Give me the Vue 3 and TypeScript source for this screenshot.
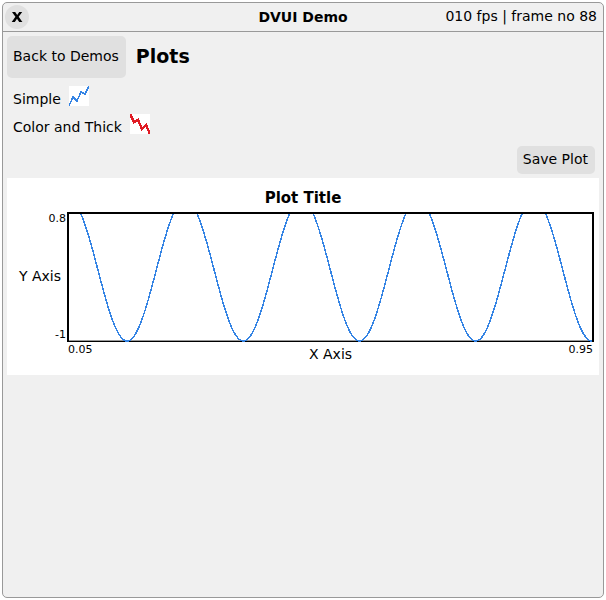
<script setup lang="ts">
interface Range {
  min: number
  max: number
}

const xRange: Range = { min: 0.05, max: 0.95 }
const yRange: Range = { min: -1, max: 0.8 }
const plotWidth = 525
const plotHeight = 128
const frequency = 5
const samples = 1000

function wave(x: number): number {
  return Math.sin(2 * Math.PI * frequency * x)
}

function buildPoints(): string {
  const points: string[] = []
  for (let i = 0; i <= samples; i++) {
    const x = xRange.min + ((xRange.max - xRange.min) * i) / samples
    const px = ((x - xRange.min) / (xRange.max - xRange.min)) * plotWidth
    const py = ((yRange.max - wave(x)) / (yRange.max - yRange.min)) * plotHeight
    points.push(`${px.toFixed(2)},${py.toFixed(2)}`)
  }
  return points.join(' ')
}

const curve = buildPoints()
const fps = '010'
const frame = 88
</script>

<template>
  <main class="window">
    <header class="titlebar">
      <button class="close" type="button" aria-label="Close">
        <svg viewBox="0 0 24 24" aria-hidden="true">
          <path d="M7 7h3.200l2 2.900 2-2.900h3l-3.500 4.800 3.700 5.200h-3.200l-2.200-3.300-2.200 3.300H6.700l3.700-5.200z" />
        </svg>
      </button>
      <h1 class="title">DVUI Demo</h1>
      <span class="stats">{{ fps }} fps | frame no {{ frame }}</span>
    </header>

    <div class="content">
      <div class="heading">
        <button class="button back" type="button">Back to Demos</button>
        <h2 class="page-title">Plots</h2>
      </div>

      <div class="sample">
        <span>Simple</span>
        <svg class="spark" viewBox="0 0 20 20" aria-hidden="true">
          <polyline class="spark-thin" points="0,20 4,11 8,15 12,6 16,8 20,0" />
        </svg>
      </div>
      <div class="sample">
        <span>Color and Thick</span>
        <svg class="spark" viewBox="0 0 20 20" aria-hidden="true">
          <polyline class="spark-thick" points="0,0 4,8 8,6 12,15 16,11 20,20" />
        </svg>
      </div>

      <div class="actions">
        <button class="button" type="button">Save Plot</button>
      </div>

      <figure class="plot">
        <figcaption class="plot-title">Plot Title</figcaption>
        <div class="y-side">
          <span class="tick">{{ yRange.max }}</span>
          <span class="y-name">Y Axis</span>
          <span class="tick">{{ yRange.min }}</span>
        </div>
        <div class="frame">
          <svg
            class="curve"
            :viewBox="`0 0 ${plotWidth} ${plotHeight}`"
            preserveAspectRatio="none"
            role="img"
            aria-label="Sine wave"
          >
            <polyline :points="curve" vector-effect="non-scaling-stroke" />
          </svg>
        </div>
        <div class="x-side">
          <span class="tick">{{ xRange.min }}</span>
          <span class="x-name">X Axis</span>
          <span class="tick">{{ xRange.max }}</span>
        </div>
      </figure>
    </div>
  </main>
</template>

<style>
body {
  background: #fff;
}
</style>

<style scoped>
.window {
  box-sizing: border-box;
  min-height: calc(100vh - 4px);
  margin: 2px;
  border: 1px solid #999;
  border-radius: 5px;
  background: #f0f0f0;
  color: #000;
  font: 14px/18px "DejaVu Sans", sans-serif;
}

.titlebar {
  display: grid;
  grid-template-columns: 1fr auto 1fr;
  align-items: center;
  height: 28px;
  padding: 0 2px;
  border-bottom: 1px solid #999;
}

.close {
  width: 24px;
  height: 24px;
  padding: 0;
  border: 0;
  border-radius: 50%;
  background: #e0e0e0;
}

.close svg {
  display: block;
}

.title {
  margin: 0;
  font-size: 14px;
  line-height: 18px;
}

.stats {
  justify-self: end;
  padding: 0 4px 2px 0;
}

.content {
  padding: 4px;
}

.heading {
  display: flex;
  align-items: center;
  gap: 10px;
  margin-bottom: 6px;
}

.button {
  padding: 4px 7px 6px 6px;
  border: 0;
  border-radius: 5px;
  background: #e0e0e0;
  color: inherit;
  font: inherit;
}

.back {
  padding: 11px 7px 13px 6px;
}

.page-title {
  margin: 0;
  padding-bottom: 2px;
  font-size: 19px;
  line-height: 24px;
}

.sample {
  display: flex;
  align-items: flex-end;
  gap: 8px;
  height: 24px;
  padding: 0 6px 4px;
}

.spark {
  width: 20px;
  height: 20px;
  margin-bottom: 2px;
  background: #fff;
}

.spark polyline {
  fill: none;
  shape-rendering: crispEdges;
}

.spark-thin {
  stroke: #3584e4;
  stroke-width: 1.5;
}

.spark-thick {
  stroke: #e01b24;
  stroke-width: 2.5;
}

.actions {
  display: flex;
  justify-content: flex-end;
  padding: 6px 4px 4px;
}

.plot {
  display: grid;
  grid-template-columns: auto 1fr;
  margin: 0;
  padding: 11px 0 12px;
  background: #fff;
}

.plot-title {
  grid-column: 1 / -1;
  padding-bottom: 5px;
  font-size: 15px;
  font-weight: bold;
  text-align: center;
}

.y-side {
  display: flex;
  flex-direction: column;
  justify-content: space-between;
  align-items: flex-end;
  padding: 0 1px 0 12px;
}

.y-name {
  padding: 0 5px 2px 0;
}

.tick {
  font-size: 11px;
  line-height: 14px;
}

.frame {
  height: 127px;
  margin-right: 5px;
  border: 2px solid #000;
  border-bottom-width: 1px;
  box-shadow: inset 0 -1px #999;
}

.curve {
  display: block;
  width: 100%;
  height: 127px;
  overflow: visible;
  clip-path: inset(0 0 -1px 0);
}

.curve polyline {
  fill: none;
  stroke: #3584e4;
  stroke-width: 1.5;
  shape-rendering: crispEdges;
}

.x-side {
  display: flex;
  grid-column: 2;
  justify-content: space-between;
  padding: 1px 6px 0 1px;
}

.x-name {
  padding-top: 2px;
}
</style>
